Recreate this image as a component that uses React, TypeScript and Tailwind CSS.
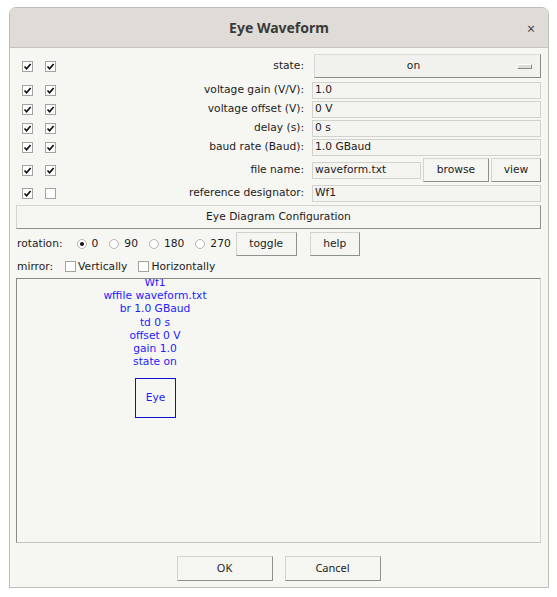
import React from "react";

const font = "font-['DejaVu_Sans',sans-serif] text-[10.7px] text-[#1c1c1c]";

const Check = ({ checked }: { checked: boolean }) => (
  <span className="flex h-[11px] w-[11px] shrink-0 items-center justify-center border border-[#a3a3a0] bg-white">
    {checked && (
      <svg width="9" height="9" viewBox="0 0 9 9">
        <path d="M1.5 4.5 L3.6 6.8 L7.6 2" fill="none" stroke="#111" strokeWidth="1.7" />
      </svg>
    )}
  </span>
);

const Radio = ({ checked }: { checked: boolean }) => (
  <span className="flex h-[10px] w-[10px] shrink-0 items-center justify-center rounded-full border border-[#b5b5b2] bg-white">
    {checked && <span className="h-[4px] w-[4px] rounded-full bg-[#111]" />}
  </span>
);

const TkButton = ({ label, className }: { label: string; className: string }) => (
  <div
    className={`flex items-center justify-center border border-[#d4d4cf] border-b-[#8f8f8c] border-r-[#8f8f8c] bg-[#f5f5f1] ${className}`}
  >
    {label}
  </div>
);

const Entry = ({ value, className }: { value: string; className: string }) => (
  <div className={`flex h-[17px] items-center border border-[#d2d2cd] bg-[#f4f4f0] pl-[2px] ${className}`}>
    {value}
  </div>
);

const FieldRow = ({
  second,
  label,
  height,
  children,
}: {
  second: boolean;
  label: string;
  height: string;
  children: React.ReactNode;
}) => (
  <div className={`flex items-center ${height}`}>
    <div className="ml-[6px] flex items-center gap-[12px]">
      <Check checked />
      <Check checked={second} />
    </div>
    <div className="mr-[8px] flex-1 text-right">{label}</div>
    <div className="flex w-[229px] items-center">{children}</div>
  </div>
);

const canvasLines = ["Wf1", "wffile waveform.txt", "br 1.0 GBaud", "td 0 s", "offset 0 V", "gain 1.0", "state on"];

const App = () => {
  return (
    <div className="min-h-screen bg-white pl-[9px] pt-[7px]">
      <div className={`flex h-[581px] w-[540px] flex-col overflow-hidden rounded-t-[7px] border border-[#bdbdbb] bg-[#f6f6f2] ${font}`}>
        <div className="relative flex h-[40px] shrink-0 items-center justify-center border-b border-[#c6c3bf] bg-[#dfdcd8]">
          <span className="font-['Noto_Sans',sans-serif] text-[14px] font-bold text-[#3a3a3a]">Eye Waveform</span>
          <span className="absolute right-[13px] top-[10px] font-['Noto_Sans',sans-serif] text-[14px] text-[#444]">×</span>
        </div>

        <div className="flex flex-1 flex-col pl-[6px] pr-[7px]">
          <div className="mt-[6px]">
            <FieldRow second label="state:" height="h-[24px]">
              <div className="relative ml-[2px] flex h-[24px] w-[227px] items-center justify-center border border-[#dcdcd7] border-b-[#8a8a87] border-r-[#8a8a87] bg-[#f1f1ed] pr-[28px]">
                on
                <span className="absolute right-[8px] top-[9px] h-[5px] w-[15px] border border-[#fdfdfb] border-b-[#8a8a87] border-r-[#8a8a87] bg-[#deded9]" />
              </div>
            </FieldRow>
          </div>
          <div className="mt-[3px]">
            <FieldRow second label="voltage gain (V/V):" height="h-[19px]">
              <Entry value="1.0" className="w-[229px]" />
            </FieldRow>
            <FieldRow second label="voltage offset (V):" height="h-[19px]">
              <Entry value="0 V" className="w-[229px]" />
            </FieldRow>
            <FieldRow second label="delay (s):" height="h-[19px]">
              <Entry value="0 s" className="w-[229px]" />
            </FieldRow>
            <FieldRow second label="baud rate (Baud):" height="h-[19px]">
              <Entry value="1.0 GBaud" className="w-[229px]" />
            </FieldRow>
          </div>
          <div className="mt-[1px]">
            <FieldRow second label="file name:" height="h-[24px]">
              <Entry value="waveform.txt" className="w-[109px]" />
              <TkButton label="browse" className="ml-[2px] h-[24px] w-[66px]" />
              <TkButton label="view" className="ml-[2px] h-[24px] w-[50px]" />
            </FieldRow>
          </div>
          <div className="mt-[2px]">
            <FieldRow second={false} label="reference designator:" height="h-[19px]">
              <Entry value="Wf1" className="w-[229px]" />
            </FieldRow>
          </div>

          <TkButton label="Eye Diagram Configuration" className="mt-[2px] h-[24px] w-full" />

          <div className="mt-[3px] flex h-[24px] items-center pl-[1px]">
            <span>rotation:</span>
            <div className="ml-[14px] flex items-center gap-[11px]">
              {["0", "90", "180", "270"].map((r, i) => (
                <div key={r} className="flex items-center gap-[5px]">
                  <Radio checked={i === 0} />
                  <span>{r}</span>
                </div>
              ))}
            </div>
            <TkButton label="toggle" className="ml-[5px] h-[24px] w-[61px]" />
            <TkButton label="help" className="ml-[13px] h-[24px] w-[50px]" />
          </div>

          <div className="flex h-[22px] items-center pl-[1px]">
            <span>mirror:</span>
            <div className="ml-[12px] flex items-center gap-[2px]">
              <Check checked={false} />
              <span>Vertically</span>
            </div>
            <div className="ml-[11px] flex items-center gap-[2px]">
              <Check checked={false} />
              <span>Horizontally</span>
            </div>
          </div>

          <div className="relative h-[265px] overflow-hidden border border-[#8a8a87] border-b-[#c4c4c0] border-r-[#d0d0cc]">
            <div className="absolute left-[138px] top-[-3px] flex -translate-x-1/2 flex-col items-center text-[#1d1dff] leading-[13.2px]">
              {canvasLines.map((l) => (
                <span key={l} className="whitespace-nowrap">
                  {l}
                </span>
              ))}
            </div>
            <div className="absolute left-[118px] top-[99px] flex h-[40px] w-[41px] items-center justify-center border border-[#1010c8] text-[#1d1dff]">
              Eye
            </div>
          </div>

          <div className="mt-[13px] flex justify-center gap-[12px] font-['Noto_Sans',sans-serif] text-[11px]">
            <TkButton label="OK" className="h-[25px] w-[96px]" />
            <TkButton label="Cancel" className="h-[25px] w-[96px]" />
          </div>
        </div>
      </div>
    </div>
  );
};

export default App;
